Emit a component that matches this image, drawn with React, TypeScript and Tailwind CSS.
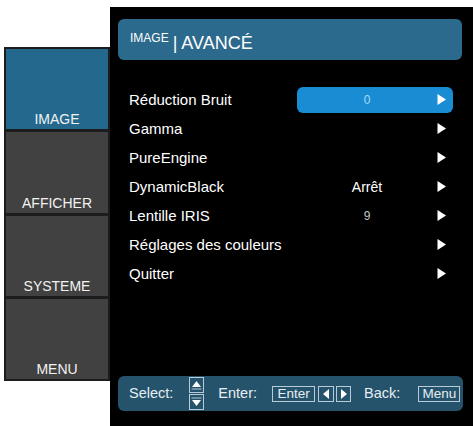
import React from "react";

type Row = { label: string; value?: string; tone?: "main" | "small"; active?: boolean };

const rows: Row[] = [
  { label: "Réduction Bruit", value: "0", tone: "small", active: true },
  { label: "Gamma" },
  { label: "PureEngine" },
  { label: "DynamicBlack", value: "Arrêt", tone: "main" },
  { label: "Lentille IRIS", value: "9", tone: "small" },
  { label: "Réglages des couleurs" },
  { label: "Quitter" },
];

const tabs = ["IMAGE", "AFFICHER", "SYSTEME", "MENU"];

function RightArrow() {
  return (
    <svg width="9" height="11" viewBox="0 0 9 11" className="shrink-0">
      <path d="M0.5 0 L9 5.5 L0.5 11 Z" fill="#ffffff" />
    </svg>
  );
}

function UpDownIcon() {
  return (
    <svg width="15" height="33" viewBox="0 0 15 33" className="shrink-0">
      <rect x="0.5" y="0.5" width="14" height="15" fill="none" stroke="#b9cbd6" />
      <path d="M3 10 L7.5 4 L12 10 Z" fill="#ffffff" />
      <line x1="2.5" y1="12" x2="12.5" y2="12" stroke="#b9cbd6" />
      <rect x="0.5" y="17.5" width="14" height="15" fill="none" stroke="#b9cbd6" />
      <path d="M3 23 L12 23 L7.5 29 Z" fill="#ffffff" />
      <line x1="2.5" y1="21" x2="12.5" y2="21" stroke="#b9cbd6" />
    </svg>
  );
}

function KeyBox({ children, w }: { children: React.ReactNode; w: string }) {
  return (
    <div
      className={`${w} flex h-[16px] items-center justify-center border border-[#b9cbd6] text-[13.5px] leading-none text-[#e6eef3]`}
    >
      {children}
    </div>
  );
}

export default function App() {
  return (
    <div className="flex h-[426px] w-[473px] items-start overflow-hidden bg-white font-['Liberation_Sans',Arial,sans-serif]">
      {/* left tabs */}
      <div className="ml-[4px] mt-[47px] flex h-[334px] w-[106px] flex-col gap-[3px] bg-[#1c1c1c] p-[2px]">
        {tabs.map((t, i) => (
          <div
            key={t}
            className={`flex flex-1 items-end justify-center pb-[3px] ${i === 0 ? "bg-[#24688e]" : "bg-[#414141]"}`}
          >
            <span className="text-[14px] leading-none text-[#f2f2f2]">{t}</span>
          </div>
        ))}
      </div>

      {/* main panel */}
      <div className="mt-[7px] flex h-[419px] flex-1 flex-col bg-black">
        <div className="ml-[8px] mr-[11px] mt-[12px] flex h-[41px] items-start rounded-[6px] bg-[#2c6a8d] pl-[12px] pt-[13px] text-white">
          <span className="text-[12px] leading-none">IMAGE</span>
          <span className="ml-[4px] mt-[2px] whitespace-pre text-[18px] leading-none">| AVANCÉ</span>
        </div>

        <div className="mt-[25px] flex flex-col pl-[19px]">
          {rows.map((r) => (
            <div key={r.label} className="flex h-[29px] items-center">
              <div className="w-[168px] text-[15px] leading-none text-white">{r.label}</div>
              <div
                className={`flex h-[26px] w-[156px] items-center rounded-[6px] ${r.active ? "bg-[#1a8cd4]" : ""}`}
              >
                <div
                  className={`w-[140px] text-center leading-none ${
                    r.tone === "main"
                      ? "text-[14px] text-white"
                      : r.active
                        ? "text-[12px] text-[#a8daf4]"
                        : "text-[12px] text-[#c4c4c4]"
                  }`}
                >
                  {r.value ?? ""}
                </div>
                <RightArrow />
              </div>
            </div>
          ))}
        </div>

        <div className="mb-[15px] ml-[8px] mr-[10px] mt-auto flex h-[35px] items-center rounded-[6px] bg-[#25536b] pl-[11px] text-[14.5px] leading-none text-[#e6eef3]">
          <span>Select:</span>
          <span className="ml-[16px]">
            <UpDownIcon />
          </span>
          <span className="ml-[14px]">Enter:</span>
          <span className="ml-[15px]">
            <KeyBox w="w-[43px]">Enter</KeyBox>
          </span>
          <span className="ml-[3px]">
            <KeyBox w="w-[16px]">
              <svg width="6" height="10" viewBox="0 0 6 10">
                <path d="M6 0 L0 5 L6 10 Z" fill="#ffffff" />
              </svg>
            </KeyBox>
          </span>
          <span className="ml-[2px]">
            <KeyBox w="w-[15px]">
              <svg width="6" height="10" viewBox="0 0 6 10">
                <path d="M0 0 L6 5 L0 10 Z" fill="#ffffff" />
              </svg>
            </KeyBox>
          </span>
          <span className="ml-[13px]">Back:</span>
          <span className="ml-[18px]">
            <KeyBox w="w-[42px]">Menu</KeyBox>
          </span>
        </div>
      </div>
    </div>
  );
}
